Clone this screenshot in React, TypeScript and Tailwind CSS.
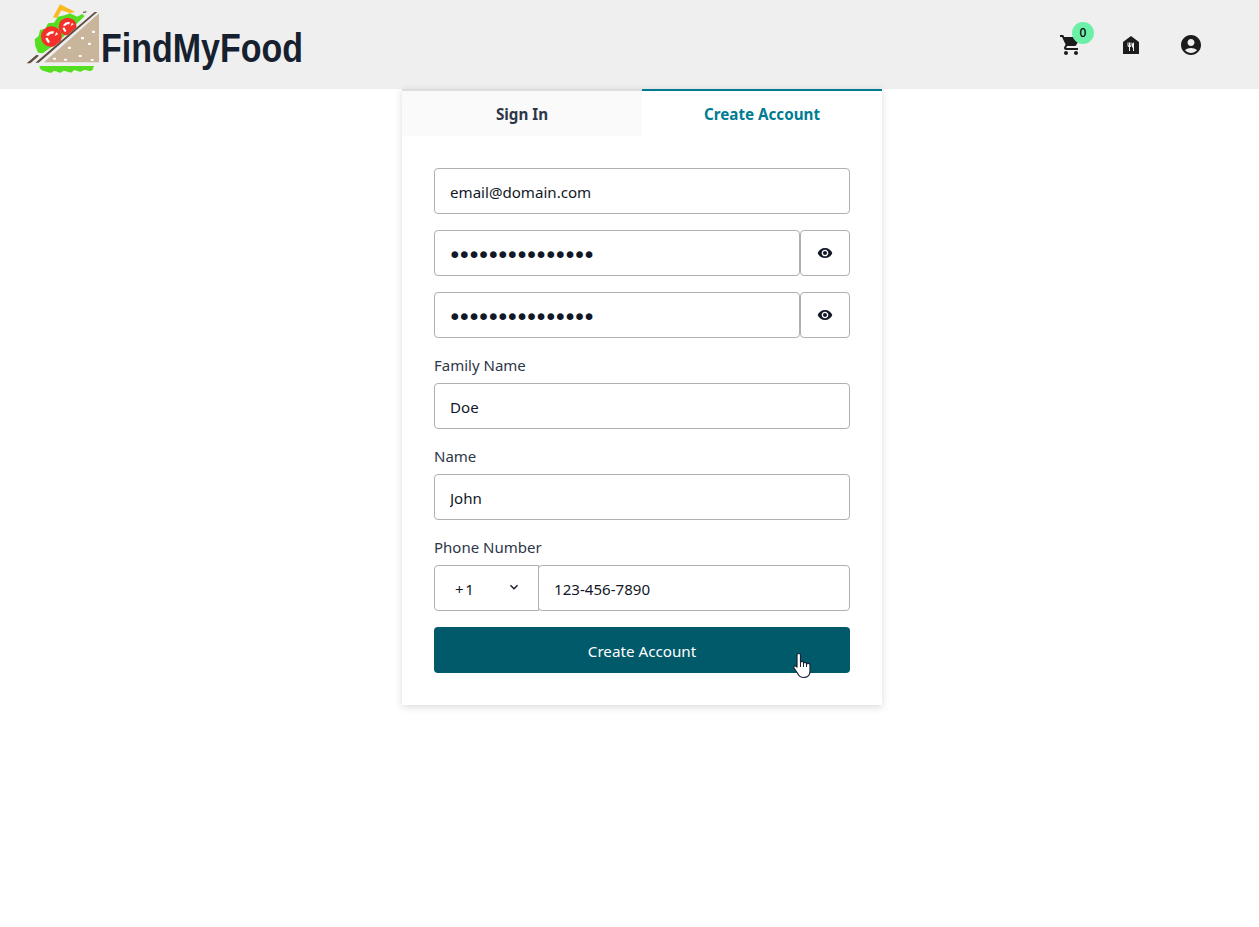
import { MdShoppingCart, MdFoodBank, MdAccountCircle, MdVisibility, MdKeyboardArrowDown } from "react-icons/md";

function Tomato({ cx, cy, r }: { cx: number; cy: number; r: number }) {
  const k = r / 28;
  return (
    <g transform={`translate(${cx} ${cy}) scale(${k})`}>
      <circle r="30" fill="#f5302b" />
      <path d="M-16 -4 C-10 -14 -2 -17 8 -15 L5 -8 C-1 -9 -5 -7 -8 -2 Z" fill="#fff" />
      <path d="M-17 4 L-10 3 C-9 8 -7 11 -4 13 L-8 19 C-13 15 -16 10 -17 4 Z" fill="#fff" />
      <path d="M14 -13 L20 -8 L10 -2 Z" fill="#fff" />
    </g>
  );
}

function Logo() {
  return (
    <svg viewBox="0 0 243 267" className="w-[81px] h-[89px] shrink-0">
      <path d="M99 52 L120 13 L166 36 L150 39 L124 31 L111 54 Z" fill="#fbb81f" />
      <path d="M54 158 L46 138 L44 118 L56 108 L60 90 L76 86 L84 70 L102 68 L114 50 L134 46 L150 40 L172 50 L186 42 L194 48 L110 130 L68 160 Z" fill="#55dd20" />
      <Tomato cx={94} cy={110} r={29} />
      <Tomato cx={143} cy={80} r={25} />
      <path d="M30 200 L232 30 L262 30 L262 60 L90 200 Z" fill="#efefef" />
      <path d="M46 188 L224 36 L232 36 L56 188 Z" fill="#5f4d40" />
      <path d="M20 190 L50 164 L57 167 L31 190 Z" fill="#5f4d40" />
      <path d="M188 36 L198 33 L200 37 L190 40 Z" fill="#7a695c" />
      <path d="M72 187 L237 40 L237 187 Z" fill="#c9b59c" />
      <g fill="#ffffff">
        <rect x="99" y="173" width="9" height="6" rx="2" />
        <rect x="132" y="176" width="9" height="6" rx="2" />
        <rect x="176" y="165" width="9" height="6" rx="2" />
        <rect x="212" y="177" width="9" height="6" rx="2" />
        <rect x="144" y="140" width="9" height="7" rx="2" />
        <rect x="204" y="128" width="9" height="7" rx="2" />
        <rect x="183" y="111" width="9" height="7" rx="2" />
        <rect x="216" y="92" width="9" height="7" rx="2" />
      </g>
      <path d="M58 198 L222 198 L218 209 C208 218 200 207 190 211 C178 222 170 207 160 212 C150 226 140 208 128 214 C118 226 110 208 100 214 C90 224 82 214 72 213 C64 212 60 208 58 198 Z" fill="#55dd20" />
    </svg>
  );
}

function Field({ type = "text", value, className = "" }: { type?: string; value: string; className?: string }) {
  return (
    <input
      readOnly
      type={type}
      value={value}
      className={`h-[46px] w-full min-w-0 rounded border border-[#adb0b5] bg-white pl-[15px] pr-4 pt-[2px] text-[15.1px] text-[#111827] outline-none ${className}`}
    />
  );
}

function PasswordRow() {
  return (
    <div className="flex">
      <Field type="password" value="aaaaaaaaaaaaaaa" className="flex-1 !pl-[13px] !pt-[4px] font-['DejaVu_Sans',sans-serif] !text-[23px] tracking-[-3.97px]" />
      <button type="button" className="flex h-[46px] w-[50px] shrink-0 items-center justify-center rounded border border-[#adb0b5] bg-white text-[#111827]">
        <MdVisibility size={16} className="-mt-[1px]" />
      </button>
    </div>
  );
}

function Labeled({ label, children }: { label: string; children: React.ReactNode }) {
  return (
    <div className="flex flex-col">
      <label className="mb-[5px] h-6 text-[15px] leading-[22px] text-[#2d3748]">{label}</label>
      {children}
    </div>
  );
}

export default function App() {
  return (
    <div className="min-h-[927px] bg-white font-['Noto_Sans','Open_Sans',sans-serif]">
      <header className="flex h-[89px] items-start bg-[#efefef] pl-5 pr-14">
        <Logo />
        <span className="mt-[24px] origin-left scale-x-[0.85] font-['Liberation_Sans',sans-serif] text-[40px] font-bold leading-[48px] whitespace-nowrap text-[#17202e]">
          FindMyFood
        </span>
        <nav className="ml-auto mt-[33px] flex gap-9 text-[#1c1c1c]">
          <div className="relative h-6 w-6">
            <MdShoppingCart size={24} />
            <span className="absolute left-[13px] top-[-11px] flex h-[22px] w-[22px] items-center justify-center rounded-full bg-[#6cf0a8] text-[12px] font-medium text-black">
              0
            </span>
          </div>
          <MdFoodBank size={24} />
          <MdAccountCircle size={24} />
        </nav>
      </header>
      <main className="ml-[402px] w-[480px] bg-white shadow-[0_2px_8px_rgba(0,0,0,0.15)]">
        <div className="flex">
          <button type="button" className="h-[47px] w-1/2 border-t-2 border-[#dddddd] bg-[#fafafa] pt-[2px] text-[15.2px] font-bold text-[#2d3748]">Sign In</button>
          <button type="button" className="h-[47px] w-1/2 border-t-2 border-[#007c91] bg-white pt-[2px] text-[15.2px] font-bold text-[#007c91]">Create Account</button>
        </div>
        <form className="flex flex-col gap-4 p-8">
          <Field value="email@domain.com" />
          <PasswordRow />
          <PasswordRow />
          <Labeled label="Family Name"><Field value="Doe" /></Labeled>
          <Labeled label="Name"><Field value="John" /></Labeled>
          <Labeled label="Phone Number">
            <div className="flex">
              <div className="flex h-[46px] w-[105px] shrink-0 items-center rounded-l border border-[#adb0b5] pl-[20px] pt-[2px] text-[15.1px] text-[#111827]">
                <span className="tracking-[1.5px]">+1</span>
                <MdKeyboardArrowDown size={16} className="ml-[31px] -mt-[5px]" />
              </div>
              <Field value="123-456-7890" className="flex-1 -ml-[1px]" />
            </div>
          </Labeled>
          <button type="button" className="relative h-[46px] rounded bg-[#005a6a] pt-[2px] text-[15.2px] text-white">
            Create Account
            <svg viewBox="0 0 24 28" className="absolute left-[358px] top-[25px] h-[28px] w-[24px]">
              <path d="M5 3 C5 1 8.5 1 8.5 3 L8.5 10.5 C8.5 9 11.5 9 11.5 10.5 L11.5 11.5 C11.5 10 14.5 10 14.5 11.5 L14.5 12.5 C14.5 11 18 11 18 13 L18 19 C18 23 15.5 25.5 11.5 25.5 C8 25.5 7 24 6 22 L2 16 C1 14.5 3 13 4.5 14.5 L5 15 Z" fill="#fff" stroke="#1a2433" strokeWidth="1.2" strokeLinejoin="round" />
              <path d="M8.5 10.5 L8.5 15 M11.5 11.5 L11.5 15 M14.5 12.5 L14.5 15" stroke="#1a2433" strokeWidth="1" />
            </svg>
          </button>
        </form>
      </main>
    </div>
  );
}
